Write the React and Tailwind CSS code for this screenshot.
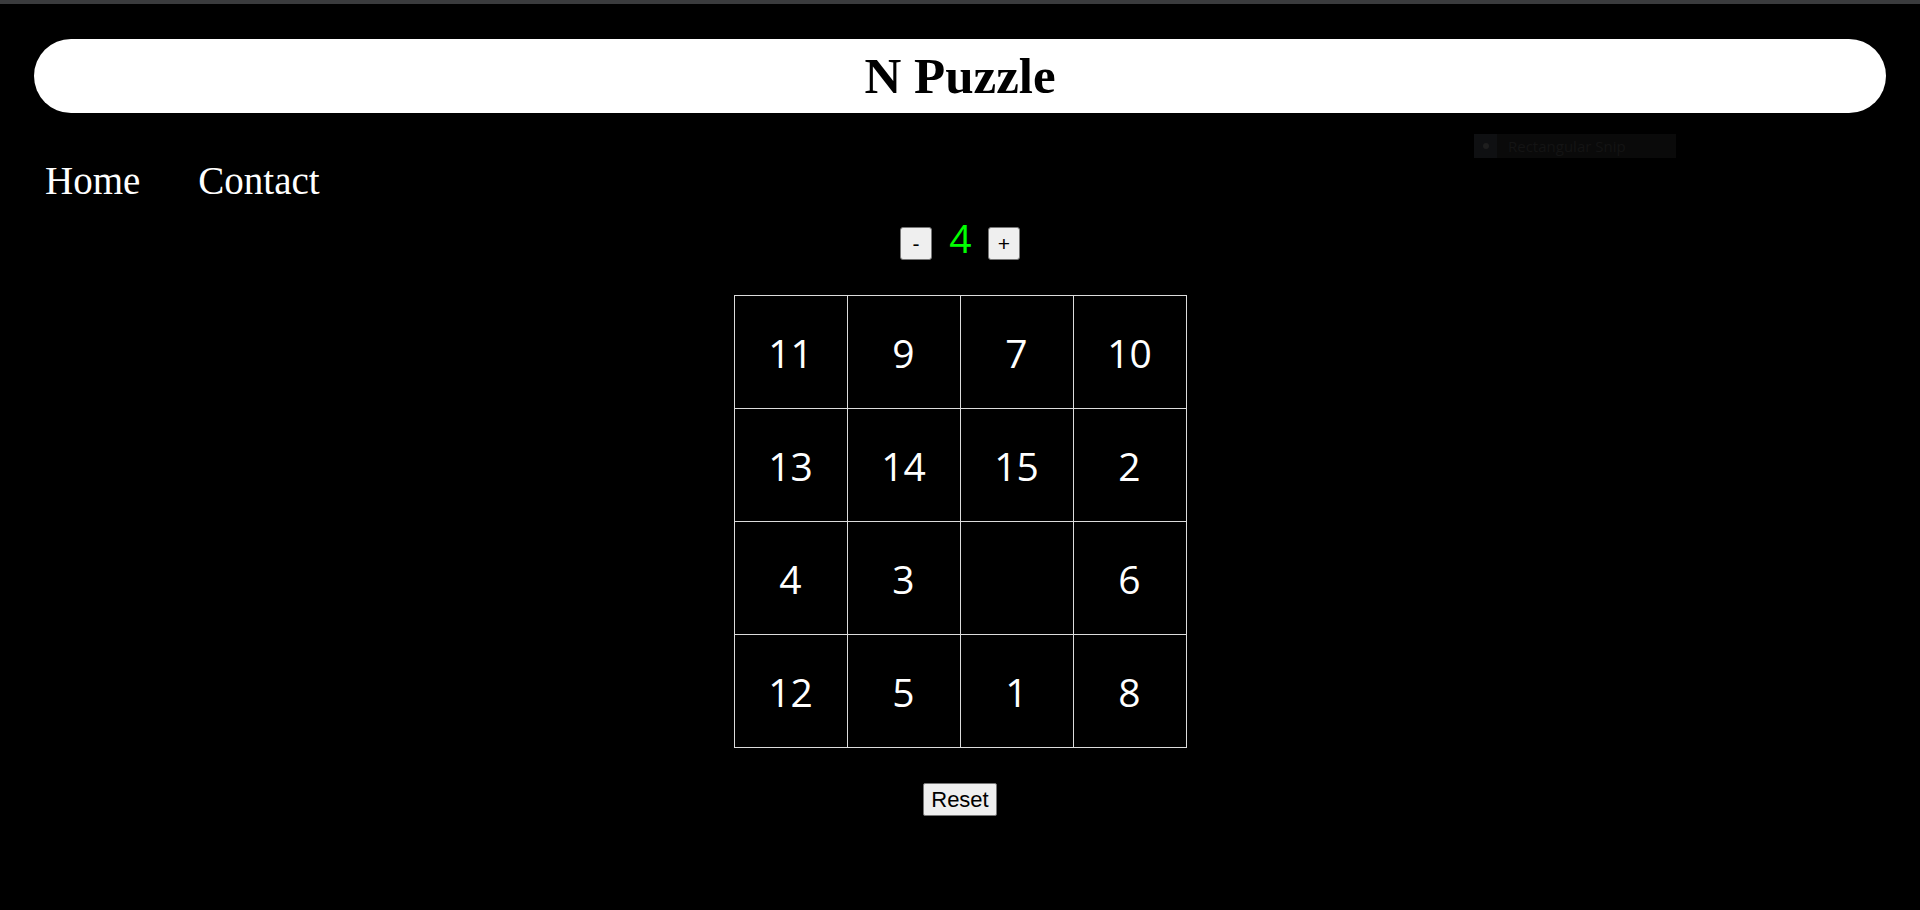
import React, { useState } from 'react';

const serif = { fontFamily: '"Liberation Serif", "Times New Roman", serif' };
const sans = { fontFamily: '"Liberation Sans", Arial, sans-serif' };
const tileFont = { fontFamily: '"Open Sans", "Noto Sans", sans-serif' };

const START = [11, 9, 7, 10, 13, 14, 15, 2, 4, 3, 0, 6, 12, 5, 1, 8];

const App = () => {
  const [size, setSize] = useState(4);
  const [tiles] = useState(START);

  return (
    <div className="min-h-screen bg-black relative">
      <div className="h-[4px] bg-[#3a3b3d]" />

      <header className="mx-[34px] mt-[35px] h-[74px] rounded-full bg-white flex items-center justify-center">
        <h1 className="text-[51px] font-bold text-black leading-none" style={serif}>N Puzzle</h1>
      </header>

      <nav className="mt-[45px] flex pl-[45px] gap-[58px] text-white text-[39px] leading-[45px]" style={serif}>
        <a href="#">Home</a>
        <a href="#">Contact</a>
      </nav>

      <div className="mt-[24px] flex justify-center items-center h-[33px]">
        <button
          onClick={() => setSize((s) => Math.max(2, s - 1))}
          className="w-[32px] h-[33px] bg-[#efefef] border border-[#767676] rounded-[3px] text-black text-[21px] leading-none flex items-center justify-center"
          style={sans}
        >
          -
        </button>
        <span
          className="ml-[17px] mr-[16px] mb-[13px] w-[23px] text-center text-[39px] font-medium leading-none text-[#00ff00]"
          style={tileFont}
        >
          {size}
        </span>
        <button
          onClick={() => setSize((s) => s + 1)}
          className="w-[32px] h-[33px] bg-[#efefef] border border-[#767676] rounded-[3px] text-black text-[21px] leading-none flex items-center justify-center"
          style={sans}
        >
          +
        </button>
      </div>

      <div className="mt-[35px] mx-auto w-[453px] grid grid-cols-4 border-l border-t border-[#dcdcdc]">
        {tiles.map((t, i) => (
          <div
            key={i}
            className="w-[113px] h-[113px] border-r border-b border-[#dcdcdc] flex items-center justify-center text-white text-[39px] font-medium leading-none"
            style={tileFont}
          >
            {t === 0 ? '' : t}
          </div>
        ))}
      </div>

      <div className="mt-[35px] flex justify-center">
        <button
          className="h-[33px] px-[7px] bg-[#efefef] border border-[#767676] rounded-[2px] text-black text-[22px] leading-none"
          style={sans}
        >
          Reset
        </button>
      </div>

      {/* faint snipping-tool tooltip sitting over the page */}
      <div className="absolute left-[1474px] top-[134px] w-[202px] h-[24px] bg-[#0a0a0a] flex items-center">
        <div className="w-[23px] h-[24px] bg-[#0f1012] flex items-center justify-center">
          <div className="w-[6px] h-[6px] rounded-full bg-[#1e1e1e]" />
        </div>
        <span className="ml-[11px] text-[15px] text-[#141414]" style={tileFont}>Rectangular Snip</span>
      </div>
    </div>
  );
};

export default App;
